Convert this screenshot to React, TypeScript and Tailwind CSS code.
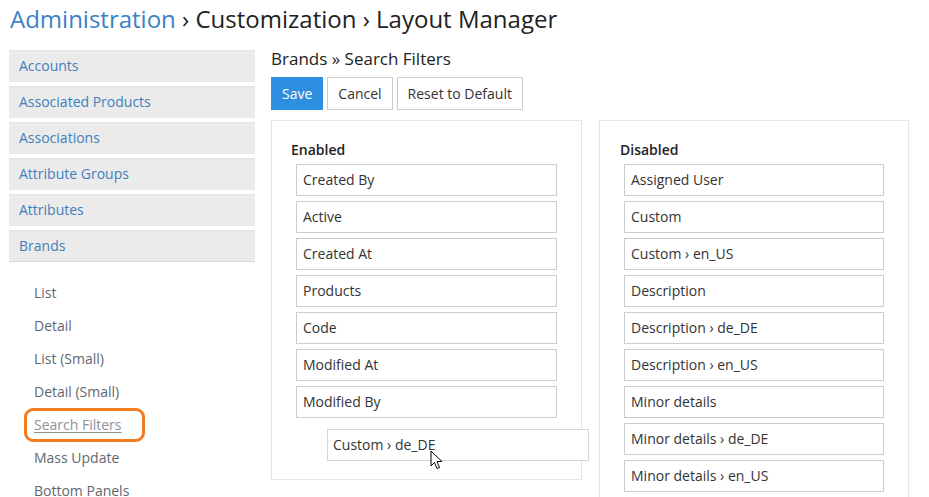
import React from "react";

const enabled = ["Created By", "Active", "Created At", "Products", "Code", "Modified At", "Modified By"];
const disabled = [
  "Assigned User",
  "Custom",
  "Custom › en_US",
  "Description",
  "Description › de_DE",
  "Description › en_US",
  "Minor details",
  "Minor details › de_DE",
  "Minor details › en_US",
];
const groups = ["Accounts", "Associated Products", "Associations", "Attribute Groups", "Attributes", "Brands"];
const subs = ["List", "Detail", "List (Small)", "Detail (Small)", "Search Filters", "Mass Update", "Bottom Panels"];

function Item({ label }: { label: string }) {
  return (
    <div className="h-[32px] mb-[5px] border border-[#cccccc] bg-white flex items-center pl-[6px] pb-[2px] text-[14px] text-[#333333]">
      {label}
    </div>
  );
}

export default function App() {
  return (
    <div className="h-[497px] overflow-hidden bg-white pl-[10px] pr-[20px] text-[#333333]" style={{ fontFamily: '"Open Sans", "Liberation Sans", sans-serif' }}>
      <h1 className="h-[40px] pt-[2px] text-[24px] leading-[34px] font-normal text-[#222222]">
        <span className="text-[#3a82c4]">Administration</span> › Customization › Layout Manager
      </h1>
      <div className="flex gap-[16px] pt-[10px]">
        <div className="w-[246px] shrink-0 -ml-[1px]">
          {groups.map((g, i) => (
            <div
              key={g}
              className={`h-[32px] mb-[4px] bg-[#ebebeb] border-t border-[#e2e2e2] flex items-center pl-[10px] pb-[2px] text-[14px] text-[#3f7fbb] ${i === groups.length - 1 ? "border-b border-b-[#dcdcdc]" : ""}`}
            >
              {g}
            </div>
          ))}
          <div className="pt-[10px] pl-[15px]">
            {subs.map((s) => (
              <div key={s} className="h-[33px] flex items-center">
                {s === "Search Filters" ? (
                  <span className="h-[34px] pl-[7px] pr-[20px] flex items-center border-[3px] border-[#f27c1f] rounded-[9px] text-[14px] text-[#8a929a] underline underline-offset-2">
                    {s}
                  </span>
                ) : (
                  <span className="pl-[10px] text-[14px] text-[#5f6871]">{s}</span>
                )}
              </div>
            ))}
          </div>
        </div>
        <div className="flex-1 min-w-0">
          <div className="h-[18px] flex items-center text-[17px] text-[#222222] mb-[9px]">Brands » Search Filters</div>
          <div className="flex gap-[4px] mb-[10px]">
            <button className="h-[33px] px-[11px] bg-[#2e8fe0] text-white text-[14px]">Save</button>
            <button className="h-[33px] px-[10px] border border-[#cccccc] bg-white text-[#333333] text-[14px]">Cancel</button>
            <button className="h-[33px] px-[10px] border border-[#cccccc] bg-white text-[#333333] text-[14px]">Reset to Default</button>
          </div>
          <div className="flex gap-[17px] items-start">
            <div className="relative w-[311px] border border-[#e6e6e6] px-[24px] pt-[19px] pb-[19px]">
              <div className="h-[20px] -ml-[5px] mb-[4px] text-[14px] font-semibold text-[#222222] leading-[20px]">Enabled</div>
              {enabled.map((e) => (
                <Item key={e} label={e} />
              ))}
              <div className="h-[32px] mb-[5px]" />
              <div className="absolute left-[55px] top-[308px] w-[262px] h-[32px] border border-[#d6d6d6] bg-white flex items-center pl-[5px] pb-[2px] text-[14px] text-[#333333]">
                Custom › de_DE
              </div>
              <svg className="absolute left-[158px] top-[329px]" width="14" height="20" viewBox="0 0 14 20">
                <path d="M1 1 L1 16 L4.5 12.5 L7 18.5 L9.5 17.5 L7 11.5 L12 11.5 Z" fill="white" stroke="black" strokeWidth="1" strokeLinejoin="round" />
              </svg>
            </div>
            <div className="w-[310px] border border-[#e6e6e6] px-[24px] pt-[19px] pb-[40px]">
              <div className="h-[20px] -ml-[4px] mb-[4px] text-[14px] font-semibold text-[#222222] leading-[20px]">Disabled</div>
              {disabled.map((e) => (
                <Item key={e} label={e} />
              ))}
            </div>
          </div>
        </div>
      </div>
    </div>
  );
}
